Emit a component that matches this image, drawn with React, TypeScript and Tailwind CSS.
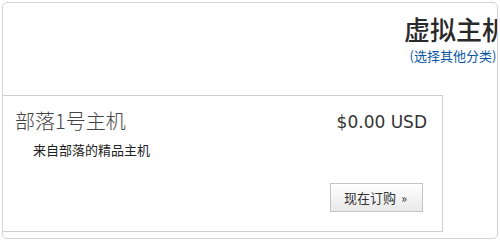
import React from 'react';

const cjk = '"Noto Sans CJK SC", "Noto Sans", sans-serif';

export default function App() {
    return (
        <div className="w-[500px] h-[240px] bg-white p-[2px]" style={{ fontFamily: cjk }}>
            {/* Outer panel */}
            <div className="w-[496px] h-[237px] border border-[#d2d2e2] rounded-[5px] overflow-hidden flex flex-col">
                {/* Category header */}
                <div className="flex justify-end pr-[41px] mt-[11px]">
                    <div className="w-[0px] flex justify-center whitespace-nowrap">
                        <h1 className="text-[26px] leading-[30px] font-medium text-[#2a2a2a]">虚拟主机</h1>
                    </div>
                </div>
                <div className="flex justify-end pr-[44px] mt-[4px]">
                    <div className="w-[0px] flex justify-center whitespace-nowrap">
                        <a className="text-[13px] leading-[16px] text-[#0b55a6]">(选择其他分类)</a>
                    </div>
                </div>

                {/* Product card */}
                <div className="mt-[31px] w-[440px] h-[137px] border-t border-r border-b border-[#cdcdcd] flex flex-col">
                    <div className="flex items-center justify-between pl-[12px] pr-[15px] pt-[9px]">
                        <span className="text-[20px] leading-[28px] font-light text-[#444]">部落1号主机</span>
                        <span className="text-[17px] leading-[28px] text-[#333] mt-[3px]" style={{ fontFamily: '"DejaVu Sans", sans-serif' }}>
                            $0.00 USD
                        </span>
                    </div>
                    <p className="pl-[30px] mt-[6px] text-[13px] leading-[16px] text-[#222]">来自部落的精品主机</p>
                    <div className="flex justify-end pr-[19px] mt-[25px]">
                        <button className="w-[93px] h-[29px] border border-[#c4c4c4] bg-gradient-to-b from-white to-[#e9e9e9] text-[13px] text-[#333] flex items-center justify-center gap-[5px] pr-[2px]">
                            <span>现在订购</span>
                            <span className="text-[12px]">»</span>
                        </button>
                    </div>
                </div>
            </div>
        </div>
    );
}
